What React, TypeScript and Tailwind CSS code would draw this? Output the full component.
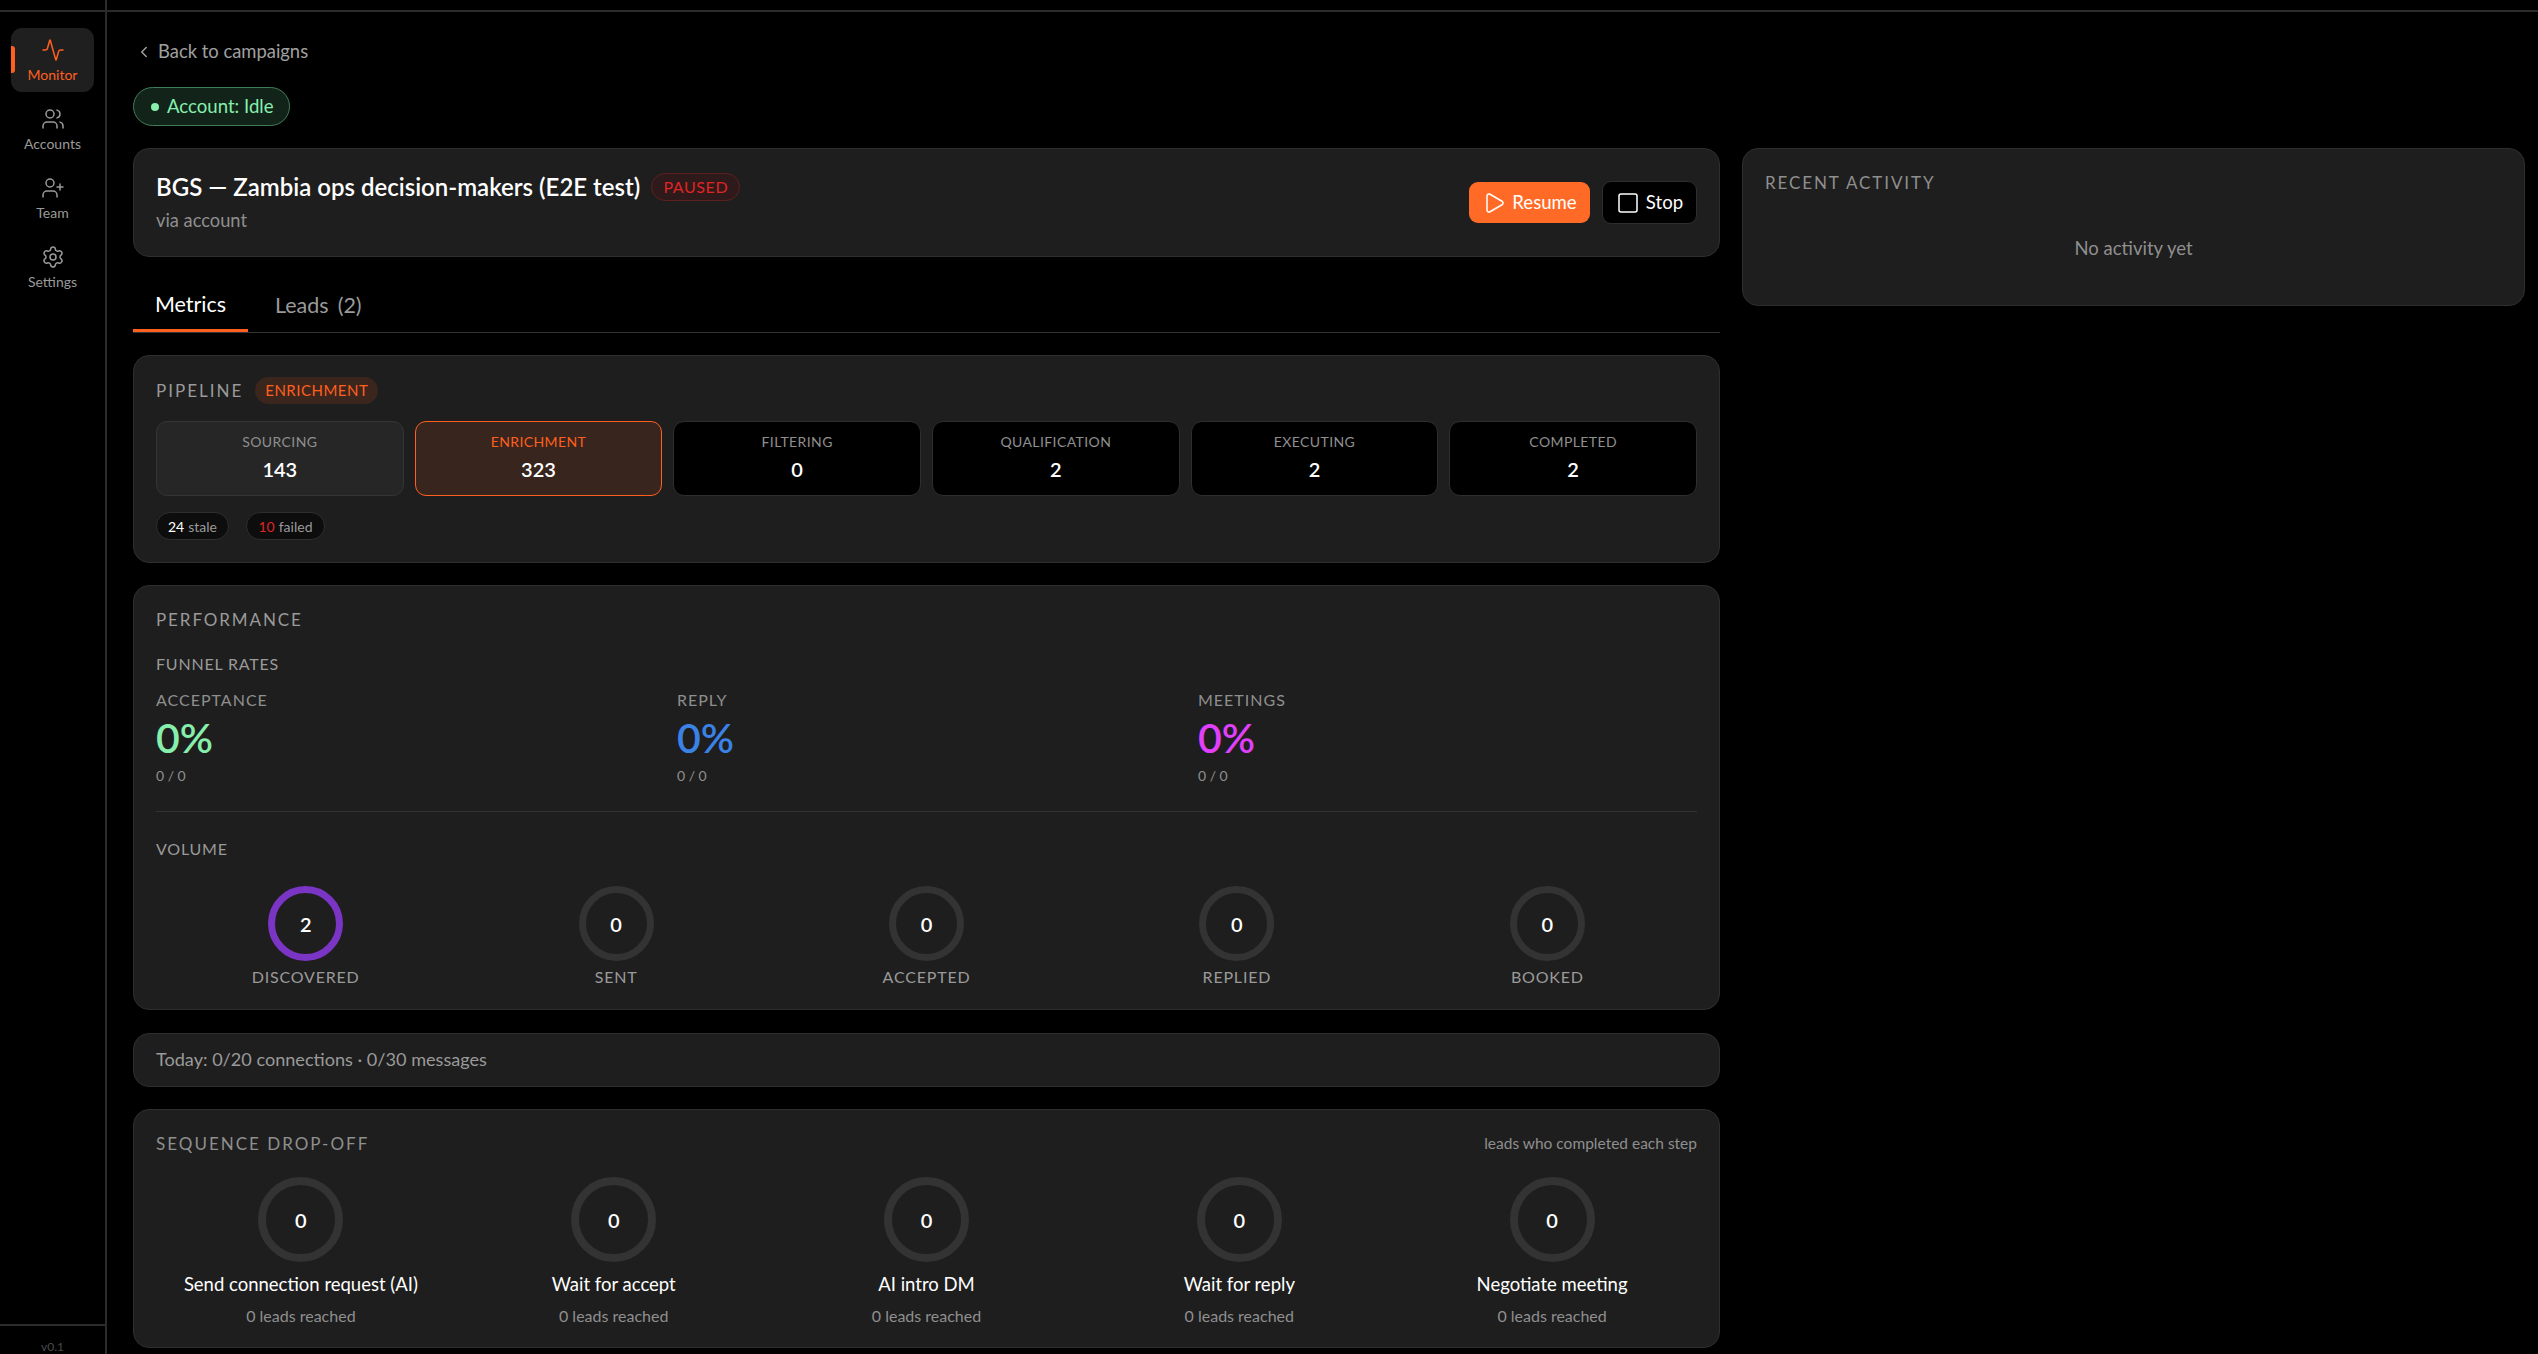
import { Activity, ChevronLeft, Play, Settings, Square, UserPlus, Users } from "lucide-react";

const navItems = [
  { label: "Monitor", icon: Activity, active: true },
  { label: "Accounts", icon: Users, active: false },
  { label: "Team", icon: UserPlus, active: false },
  { label: "Settings", icon: Settings, active: false },
];

const stages = [
  { label: "SOURCING", value: 143, kind: "done" },
  { label: "ENRICHMENT", value: 323, kind: "active" },
  { label: "FILTERING", value: 0, kind: "idle" },
  { label: "QUALIFICATION", value: 2, kind: "idle" },
  { label: "EXECUTING", value: 2, kind: "idle" },
  { label: "COMPLETED", value: 2, kind: "idle" },
];

const rates = [
  { label: "ACCEPTANCE", color: "text-[#86efac]" },
  { label: "REPLY", color: "text-[#3b82e6]" },
  { label: "MEETINGS", color: "text-[#e040fb]" },
];

const volume = [
  { label: "DISCOVERED", value: 2, ring: "border-[#7b35c4]" },
  { label: "SENT", value: 0, ring: "border-[#333333]" },
  { label: "ACCEPTED", value: 0, ring: "border-[#333333]" },
  { label: "REPLIED", value: 0, ring: "border-[#333333]" },
  { label: "BOOKED", value: 0, ring: "border-[#333333]" },
];

const steps = [
  "Send connection request (AI)",
  "Wait for accept",
  "AI intro DM",
  "Wait for reply",
  "Negotiate meeting",
];

const card = "rounded-[16px] border border-[#2e2e2e] bg-[#1e1e1e]";

export default function App() {
  return (
    <div className="flex h-screen overflow-hidden bg-black font-['Lato',sans-serif] text-white">
      {/* Sidebar */}
      <aside className="flex h-full w-[107px] shrink-0 flex-col border-r-2 border-[#2b2b2b]">
        <div className="h-[12px] shrink-0 border-b-2 border-[#2b2b2b]" />
        <nav className="flex flex-1 flex-col gap-[5px] px-[11px] pt-[16px]">
          {navItems.map((item) => (
            <div
              key={item.label}
              className={`relative flex h-[64px] w-[83px] flex-col items-center justify-center gap-[4px] rounded-[11px] pt-[2px] ${
                item.active ? "bg-[#1f1f1f] text-[#ff5f1f]" : "text-[#9a9a9a]"
              }`}
            >
              {item.active && (
                <span className="absolute left-0 top-[18px] h-[27px] w-[4px] rounded-r-[3px] bg-[#ff5f1f]" />
              )}
              <item.icon className="h-[24px] w-[24px]" strokeWidth={1.5} />
              <span className="text-[14px] leading-[18px]">{item.label}</span>
            </div>
          ))}
        </nav>
        <div className="h-[30px] shrink-0 border-t-2 border-[#2b2b2b] pt-[14px] text-center text-[12px] leading-[14px] text-[#4a4a4a]">
          v0.1
        </div>
      </aside>

      {/* Main */}
      <main className="min-w-0 flex-1">
        <div className="h-[12px] border-b-2 border-[#2b2b2b]" />
        <div className="pl-[26px] pr-[13px] pt-[28px]">
          <div className="flex h-[24px] items-center gap-[5px] pl-[2px] text-[18.4px] text-[#a0a0a0]">
            <ChevronLeft className="h-[18px] w-[18px]" strokeWidth={2} />
            <span>Back to campaigns</span>
          </div>

          <div className="mt-[23px] flex h-[39px] w-[157px] items-center gap-[8px] rounded-full border border-[#3f7d58] bg-[#12241a] pl-[17px] text-[18.6px] text-[#86efac]">
            <span className="h-[8px] w-[8px] rounded-full bg-[#86efac]" />
            Account: Idle
          </div>

          <div className="mt-[22px] grid grid-cols-[1587px_783px] gap-[22px]">
            <div className="flex flex-col">
              {/* Header */}
              <div className={`${card} flex h-[109px] items-center justify-between pl-[22px] pr-[22px]`}>
                <div className="-mt-[3px]">
                  <div className="flex items-center gap-[11px]">
                    <h1 className="text-[24px] font-semibold leading-[32px]">
                      BGS — Zambia ops decision-makers (E2E test)
                    </h1>
                    <span className="flex h-[28px] w-[89px] items-center justify-center rounded-full border border-[#5c2020] bg-[#2e1a1a] text-[16px] tracking-[0.6px] text-[#e02424]">
                      PAUSED
                    </span>
                  </div>
                  <p className="mt-[5px] text-[18.3px] leading-[24px] text-[#8f8f8f]">via account</p>
                </div>
                <div className="flex items-center gap-[12px]">
                  <button className="flex h-[41px] w-[121px] items-center justify-center gap-[6px] rounded-[9px] bg-[#ff6b26] text-[18.6px] text-white">
                    <Play className="h-[24px] w-[24px]" strokeWidth={1.5} />
                    Resume
                  </button>
                  <button className="flex h-[43px] w-[95px] items-center justify-center gap-[6px] rounded-[9px] border border-[#2e2e2e] bg-black text-[18.6px] text-white">
                    <Square className="h-[24px] w-[24px]" strokeWidth={1.5} />
                    Stop
                  </button>
                </div>
              </div>

              {/* Tabs */}
              <div className="mt-[22px] flex h-[54px] border-b border-[#333333] text-[21.5px]">
                <div className="flex w-[115px] items-center justify-center border-b-[3px] border-[#ff5f1f] text-white">
                  Metrics
                </div>
                <div className="ml-[27px] flex items-center gap-[9px] text-[#9a9a9a]">
                  <span>Leads</span>
                  <span>(2)</span>
                </div>
              </div>

              {/* Pipeline */}
              <section className={`${card} mt-[22px] h-[208px] px-[22px] pt-[21px]`}>
                <div className="flex items-center gap-[12px]">
                  <h2 className="text-[17px] tracking-[2px] text-[#9a9a9a]">PIPELINE</h2>
                  <span className="flex h-[27px] w-[123px] items-center justify-center rounded-full bg-[#3a261d] text-[15px] tracking-[0.5px] text-[#ff5f1f]">
                    ENRICHMENT
                  </span>
                </div>
                <div className="mt-[17px] grid grid-cols-6 gap-[11px]">
                  {stages.map((stage) => (
                    <div
                      key={stage.label}
                      className={`flex h-[75px] flex-col items-center justify-center rounded-[11px] border pb-[4px] ${
                        stage.kind === "active"
                          ? "border-[#ff5f1f] bg-[#38251d]"
                          : stage.kind === "done"
                            ? "border-[#353535] bg-[#262626]"
                            : "border-[#2e2e2e] bg-black"
                      }`}
                    >
                      <span
                        className={`text-[14px] leading-[20px] tracking-[0.4px] ${
                          stage.kind === "active" ? "text-[#ff5f1f]" : "text-[#8f8f8f]"
                        }`}
                      >
                        {stage.label}
                      </span>
                      <span className="mt-[5px] text-[20px] font-semibold leading-[24px] text-white">{stage.value}</span>
                    </div>
                  ))}
                </div>
                <div className="mt-[16px] flex gap-[17px] text-[14px]">
                  <span className="flex h-[28px] w-[73px] items-center justify-center gap-[4px] rounded-full border border-[#2e2e2e] bg-[#0d0d0d] text-[#9a9a9a]">
                    <span className="text-white">24</span> stale
                  </span>
                  <span className="flex h-[28px] w-[79px] items-center justify-center gap-[4px] rounded-full border border-[#2e2e2e] bg-[#0d0d0d] text-[#9a9a9a]">
                    <span className="text-[#e02424]">10</span> failed
                  </span>
                </div>
              </section>

              {/* Performance */}
              <section className={`${card} mt-[22px] h-[425px] px-[22px] pt-[22px]`}>
                <h2 className="text-[17px] leading-[24px] tracking-[1.9px] text-[#9a9a9a]">PERFORMANCE</h2>
                <h3 className="mt-[22px] text-[16px] leading-[20px] tracking-[0.8px] text-[#9a9a9a]">FUNNEL RATES</h3>
                <div className="mt-[16px] grid grid-cols-3 gap-[22px]">
                  {rates.map((rate) => (
                    <div key={rate.label}>
                      <div className="text-[16px] leading-[20px] tracking-[1px] text-[#8f8f8f]">{rate.label}</div>
                      <div className={`mt-[3px] text-[41px] font-semibold leading-[50px] ${rate.color}`}>0%</div>
                      <div className="mt-[3px] text-[14px] leading-[20px] text-[#8f8f8f]">0 / 0</div>
                    </div>
                  ))}
                </div>
                <div className="mt-[25px] border-t border-[#333333]" />
                <h3 className="mt-[27px] text-[16px] leading-[20px] tracking-[0.8px] text-[#9a9a9a]">VOLUME</h3>
                <div className="mt-[27px] grid grid-cols-5 gap-[11px]">
                  {volume.map((item) => (
                    <div key={item.label} className="flex flex-col items-center">
                      <div
                        className={`flex h-[75px] w-[75px] items-center justify-center rounded-full border-[7px] ${item.ring} text-[20px] font-semibold`}
                      >
                        {item.value}
                      </div>
                      <span className="mt-[6px] text-[16px] leading-[20px] tracking-[0.8px] text-[#9a9a9a]">
                        {item.label}
                      </span>
                    </div>
                  ))}
                </div>
              </section>

              {/* Daily limits */}
              <div className={`${card} mt-[23px] flex h-[54px] items-center px-[22px] text-[18.1px] text-[#9a9a9a]`}>
                Today: 0/20 connections · 0/30 messages
              </div>

              {/* Sequence */}
              <section className={`${card} mt-[22px] h-[239px] px-[22px] pt-[22px]`}>
                <div className="flex items-center justify-between">
                  <h2 className="text-[17px] leading-[24px] tracking-[2px] text-[#8f8f8f]">SEQUENCE DROP-OFF</h2>
                  <span className="text-[15.5px] text-[#8f8f8f]">leads who completed each step</span>
                </div>
                <div className="mt-[21px] grid grid-cols-5 gap-[23px]">
                  {steps.map((step) => (
                    <div key={step} className="flex flex-col items-center">
                      <div className="flex h-[85px] w-[85px] items-center justify-center rounded-full border-[8px] border-[#333333] text-[20px] font-semibold">
                        0
                      </div>
                      <span className="mt-[10px] text-[18.5px] leading-[24px] text-white">{step}</span>
                      <span className="mt-[10px] text-[16px] leading-[20px] text-[#8f8f8f]">0 leads reached</span>
                    </div>
                  ))}
                </div>
              </section>
            </div>

            {/* Recent activity */}
            <aside className={`${card} h-[158px] px-[22px] pt-[22px]`}>
              <h2 className="text-[17px] leading-[24px] tracking-[1.9px] text-[#8f8f8f]">RECENT ACTIVITY</h2>
              <p className="mt-[41px] text-center text-[18.5px] leading-[24px] text-[#8f8f8f]">No activity yet</p>
            </aside>
          </div>
        </div>
      </main>
    </div>
  );
}
